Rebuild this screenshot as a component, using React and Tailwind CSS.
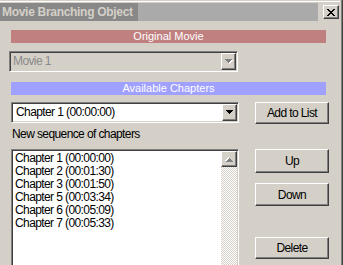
import React from "react";

const raised = "bg-[#d4d0c8] border border-t-white border-l-white border-r-[#404040] border-b-[#404040] shadow-[inset_-1px_-1px_#808080]";
const sunken = "border border-t-[#808080] border-l-[#808080] border-r-white border-b-white shadow-[inset_1px_1px_#404040,inset_-1px_-1px_#d4d0c8] p-[1px]";

const chapters = [
    "Chapter 1 (00:00:00)",
    "Chapter 2 (00:01:30)",
    "Chapter 3 (00:01:50)",
    "Chapter 5 (00:03:34)",
    "Chapter 6 (00:05:09)",
    "Chapter 7 (00:05:33)",
];

function DownArrow({ disabled }) {
    return (
        <svg width="8" height="5" viewBox="0 0 8 5" shapeRendering="crispEdges">
            {disabled && <path d="M1 1h7v1h-1v1h-1v1h-1v1h-1v-1h-1v-1h-1v-1h-1z" fill="#ffffff" />}
            <path d="M0 0h7v1h-1v1h-1v1h-1v1h-1v-1h-1v-1h-1v-1h-1z" fill={disabled ? "#808080" : "#000000"} />
        </svg>
    );
}

function Combo({ text, disabled, className }) {
    return (
        <div className={`${sunken} flex h-[21px] ${disabled ? "bg-[#d4d0c8]" : "bg-white"} ${className}`}>
            <div className={`flex-1 pl-[2px] leading-[17px] text-[12px] tracking-[-0.6px] ${disabled ? "text-[#8a8a8a]" : "text-black"}`}>
                {text}
            </div>
            <div className={`${raised} w-[15px] h-[17px] flex items-center justify-center`}>
                <DownArrow disabled={disabled} />
            </div>
        </div>
    );
}

function Button({ label, className }) {
    return (
        <div className={`${raised} w-[74px] flex items-center justify-center text-[12px] tracking-[-0.6px] text-black ${className}`}>
            {label}
        </div>
    );
}

export default function App() {
    return (
        <div className="w-[343px] h-[265px] overflow-hidden bg-[#d4d0c8] font-['Liberation_Sans',Arial,sans-serif] shadow-[inset_-1px_0_#404040,inset_-2px_0_#808080]">
            <div className="h-[3px] pt-[1px]">
                <div className="h-[1px] w-[340px] bg-white" />
            </div>
            <div className="flex h-[18px]">
                <div className="w-[138px] bg-[#888888] pl-[2px] text-[12px] font-bold leading-[18px] tracking-[-0.3px] text-[#d4d0c8] whitespace-nowrap">
                    Movie Branching Object
                </div>
                <div className="w-[180px] bg-[#aaaaaa]" />
                <div className={`${raised} ml-[5px] mt-[2px] w-[16px] h-[14px] flex items-center justify-center`}>
                    <svg width="8" height="7" viewBox="0 0 8 7" shapeRendering="crispEdges">
                        <path d="M0 0h2l2 2.5l2-2.5h2l-3 3.5l3 3.5h-2l-2-2.5l-2 2.5h-2l3-3.5z" fill="#000" />
                    </svg>
                </div>
            </div>

            <div className="mt-[9px] ml-[11px] w-[315px] h-[13px] bg-[#c08080] text-center text-[11px] leading-[13px] text-white">
                Original Movie
            </div>

            <Combo text="Movie 1" disabled className="mt-[8px] ml-[9px] w-[229px]" />

            <div className="mt-[10px] ml-[11px] w-[315px] h-[13px] bg-[#a0a0ff] text-center text-[11px] leading-[13px] text-white">
                Available Chapters
            </div>

            <div className="mt-[7px] flex items-start">
                <Combo text="Chapter 1 (00:00:00)" className="ml-[11px] w-[228px] [&>div:first-child]:pl-[3px]" />
                <Button label="Add to List" className="ml-[16px] h-[22px]" />
            </div>

            <div className="mt-[3px] ml-[12px] h-[14px] text-[12px] leading-[14px] tracking-[-0.6px] text-black">
                New sequence of chapters
            </div>

            <div className="mt-[8px] flex items-start">
                <div className={`${sunken} ml-[11px] w-[228px] h-[130px] bg-white flex`}>
                    <div className="flex-1 pl-[2px] pt-[1px] text-[12px] tracking-[-0.6px] text-black">
                        {chapters.map((c, i) => (
                            <div key={i} className="h-[13px] leading-[13px] whitespace-nowrap">{c}</div>
                        ))}
                    </div>
                    <div className="w-[16px] flex flex-col">
                        <div className={`${raised} h-[16px] flex items-center justify-center`}>
                            <div className="rotate-180">
                                <DownArrow disabled />
                            </div>
                        </div>
                        <div className="flex-1 bg-[repeating-conic-gradient(#ffffff_0%_25%,#d4d0c8_0%_50%)] bg-[length:2px_2px]" />
                    </div>
                </div>
                <div className="ml-[16px] flex flex-col">
                    <Button label="Up" className="h-[24px]" />
                    <Button label="Down" className="mt-[10px] h-[23px]" />
                    <Button label="Delete" className="mt-[31px] h-[22px]" />
                </div>
            </div>
        </div>
    );
}
